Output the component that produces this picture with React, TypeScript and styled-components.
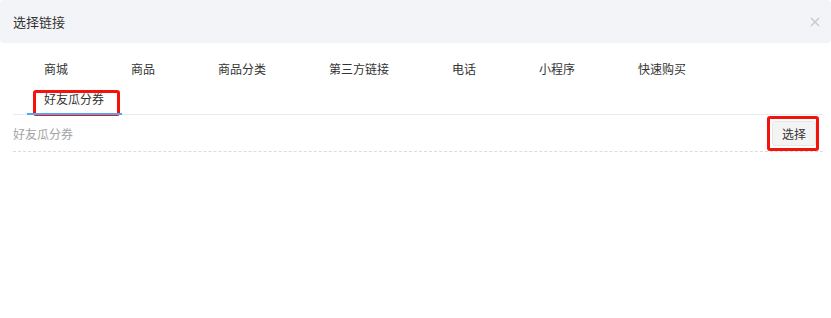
import React from 'react';
import styled, { createGlobalStyle } from 'styled-components';

const Global = createGlobalStyle`
  body {
    margin: 0;
    background: #fff;
    font-family: "Noto Sans CJK SC", "Noto Sans", sans-serif;
  }
`

const Header = styled.div`
  height: 43px;
  background: #f3f4f7;
  border-radius: 4px;
  display: flex;
  align-items: center;
  justify-content: space-between;
  padding: 0 11px 0 13px;
`
const Title = styled.div`
  font-size: 13px;
  color: #333;
`
const Close = styled.button`
  border: 0;
  background: none;
  padding: 0;
  width: 10px;
  height: 10px;
  display: flex;
  cursor: pointer;
`
const Body = styled.div`
  padding: 11px 8px 0 13px;
`
const TabNav = styled.div`
  display: flex;
  flex-wrap: wrap;
  padding-left: 13px;
  border-bottom: 1px solid #e9eaee;
`
const Tab = styled.div<{ $active?: boolean }>`
  position: relative;
  height: 30px;
  line-height: 30px;
  padding: 0 18px;
  margin-right: 27px;
  font-size: 12px;
  color: #333;
  cursor: pointer;
  &::after {
    content: '';
    display: ${p => (p.$active ? 'block' : 'none')};
    position: absolute;
    left: 1px;
    right: 0;
    bottom: -1px;
    height: 2px;
    background: #4aa8f5;
  }
`
const Mark = styled.span<{ $l: number; $r: number; $t: number; $b: number }>`
  position: absolute;
  left: ${p => p.$l}px;
  right: ${p => p.$r}px;
  top: ${p => p.$t}px;
  bottom: ${p => p.$b}px;
  border: 3px solid #f5120a;
  border-radius: 3px;
  pointer-events: none;
`
const Row = styled.div`
  display: flex;
  align-items: center;
  justify-content: space-between;
  height: 36px;
  border-bottom: 1px dashed #dcdcdc;
`
const Value = styled.div`
  font-size: 12px;
  color: #a3a3a3;
`
const BtnWrap = styled.span`
  position: relative;
  margin-right: 7px;
  display: flex;
`
const Button = styled.button`
  height: 25px;
  padding: 0 9px;
  font-family: inherit;
  font-size: 12px;
  color: #333;
  background: #f4f4f5;
  border: 1px solid #e6e6e6;
  border-radius: 3px;
  cursor: pointer;
`

const tabs = ['商城', '商品', '商品分类', '第三方链接', '电话', '小程序', '快速购买', '好友瓜分券']

export default function App() {
  const active = 7
  return (
    <>
      <Global />
      <Header>
        <Title>选择链接</Title>
        <Close>
          <svg width="10" height="10" viewBox="0 0 10 10">
            <path d="M1 1L9 9M9 1L1 9" stroke="#c6c8cc" strokeWidth="1.4" />
          </svg>
        </Close>
      </Header>
      <Body>
        <TabNav>
          {tabs.map((t, i) => (
            <Tab key={t} $active={i === active}>
              {t}
              {i === active && <Mark $l={7} $r={2} $t={6} $b={-2} />}
            </Tab>
          ))}
        </TabNav>
        <Row>
          <Value>好友瓜分券</Value>
          <BtnWrap>
            <Button>选择</Button>
            <Mark $l={-5} $r={-3} $t={-5} $b={-5} />
          </BtnWrap>
        </Row>
      </Body>
    </>
  )
}
